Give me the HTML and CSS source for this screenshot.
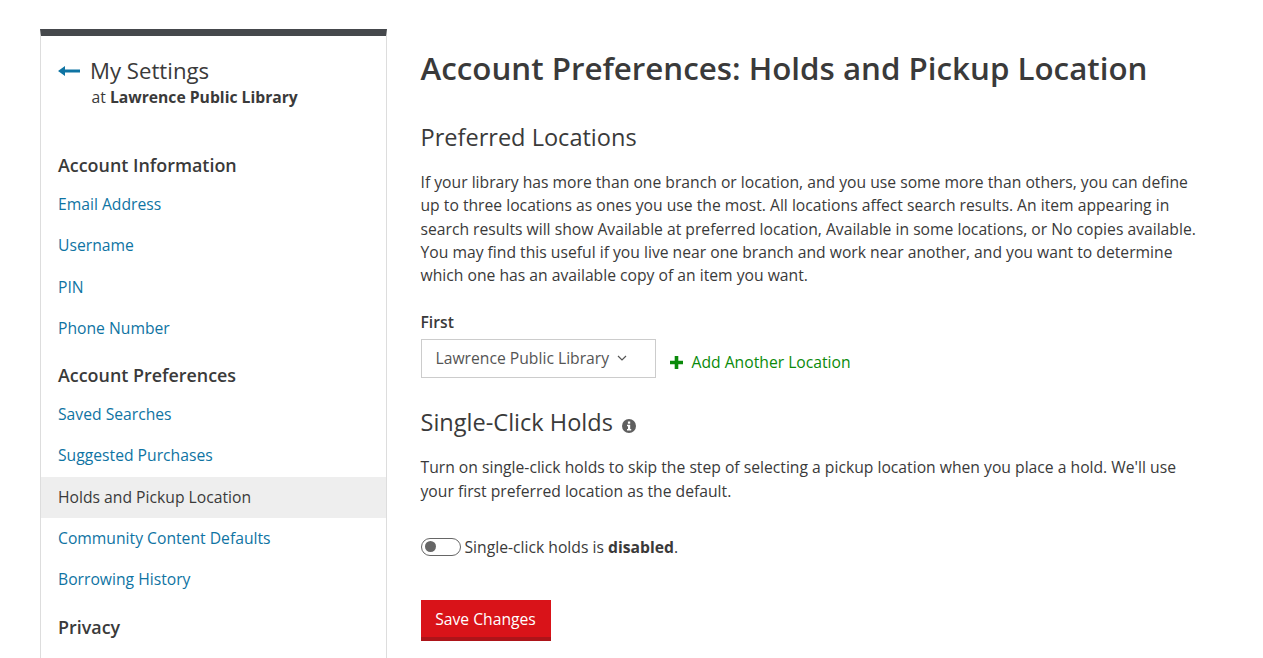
FILE: index.html
```html
<!DOCTYPE html>

<html>

<head>
	<title>Holds and Pickup Location</title>
	<link rel="stylesheet" href="styles.css">
</head>

<body>
	<div class='page'>
		<div class='sidebar'>
			<div class='side-title'>
				<svg class='back-arrow' width='22' height='10' viewBox='0 0 22 10'>
					<path d='M0 5 L7 0 V3.6 H22 V6.4 H7 V10 Z' fill='#0f74a3'></path>
				</svg>
				<span>My Settings</span>
			</div>
			<div class='side-sub'>at <b>Lawrence Public Library</b></div>

			<h3 class='side-head first'>Account Information</h3>
			<a class='side-link'>Email Address</a>
			<a class='side-link'>Username</a>
			<a class='side-link'>PIN</a>
			<a class='side-link'>Phone Number</a>

			<h3 class='side-head'>Account Preferences</h3>
			<a class='side-link'>Saved Searches</a>
			<a class='side-link'>Suggested Purchases</a>
			<a class='side-link active'>Holds and Pickup Location</a>
			<a class='side-link'>Community Content Defaults</a>
			<a class='side-link'>Borrowing History</a>

			<h3 class='side-head'>Privacy</h3>
		</div>

		<div class='main'>
			<h1>Account Preferences: Holds and Pickup Location</h1>

			<h2 class='locations'>Preferred Locations</h2>
			<p>If your library has more than one branch or location, and you use some more than others, you can define up to three locations as ones you use the most. All locations affect search results. An item appearing in search results will show Available at preferred location, Available in some locations, or No copies available. You may find this useful if you live near one branch and work near another, and you want to determine which one has an available copy of an item you want.</p>

			<div class='field-label'>First</div>
			<div class='field-row'>
				<div class='select'>
					<span>Lawrence Public Library</span>
					<svg width='10' height='6' viewBox='0 0 10 6'>
						<path d='M1 1 L5 5 L9 1' fill='none' stroke='#555' stroke-width='1.2'></path>
					</svg>
				</div>
				<a class='add-link'>
					<svg width='13' height='13' viewBox='0 0 13 13'>
						<path d='M4.7 0 H8.3 V4.7 H13 V8.3 H8.3 V13 H4.7 V8.3 H0 V4.7 H4.7 Z' fill='#0a8a0a'></path>
					</svg>
					Add Another Location
				</a>
			</div>

			<h2 class='holds'>Single-Click Holds
				<svg class='info' width='14' height='14' viewBox='0 0 14 14'>
					<circle cx='7' cy='7' r='7' fill='#5f5f5f'></circle>
					<rect x='5.9' y='2.5' width='2.3' height='2.2' fill='#fff'></rect>
					<path d='M5 5.8 H8.2 V10 H9.2 V11.4 H5 V10 H6 V7.2 H5 Z' fill='#fff'></path>
				</svg>
			</h2>
			<p>Turn on single-click holds to skip the step of selecting a pickup location when you place a hold. We'll use your first preferred location as the default.</p>

			<div class='toggle-row'>
				<span class='toggle'><span class='knob'></span></span>
				<span>Single-click holds is <b>disabled</b>.</span>
			</div>

			<button class='save'>Save Changes</button>
		</div>
	</div>
</body>

</html>
```

FILE: styles.css
```css
html,
body {
	height: 658px;
	overflow: hidden;
}

body {
	margin: 0;
	background-color: #fff;
	color: #3a3a3a;
	font-family: "Open Sans", sans-serif;
	font-size: 15.7px;
}

.page {
	display: flex;
	padding: 29px 0 0 40px;
}

.sidebar {
	width: 347px;
	height: 640px;
	box-sizing: border-box;
	flex-shrink: 0;
	border-top: 7px solid #45484c;
	border-left: 1px solid #ddd;
	border-right: 1px solid #ddd;
}

.side-title {
	display: flex;
	align-items: center;
	gap: 10px;
	padding: 20px 0 0 17px;
	font-size: 22.2px;
	line-height: 30px;
}

.side-sub {
	padding-left: 50.5px;
	line-height: 22px;
}

.side-head {
	margin: 12px 0 5px;
	padding-left: 17px;
	font-size: 17.9px;
	font-weight: 600;
	line-height: 28px;
}

.side-head.first {
	margin-top: 43px;
}

.side-link {
	display: block;
	padding-left: 17px;
	color: #0f74a3;
	line-height: 41.3px;
}

.side-link.active {
	background-color: #eee;
	color: #3a3a3a;
}

.main {
	width: 780px;
	margin-left: 33.5px;
}

h1 {
	margin: 14px 0 0;
	font-size: 31.3px;
	font-weight: 600;
	line-height: 50px;
}

h2 {
	margin: 0;
	font-size: 23.55px;
	font-weight: 400;
	line-height: 34px;
}

h2.locations {
	margin-top: 27px;
}

h2.holds {
	margin-top: 27px;
}

.info {
	margin-left: 3px;
	vertical-align: -2px;
}

p {
	margin: 17px 0 0;
	line-height: 23.25px;
}

.field-label {
	margin-top: 23px;
	font-weight: 600;
	line-height: 24px;
}

.field-row {
	display: flex;
	align-items: center;
	margin-top: 5px;
}

.select {
	display: flex;
	align-items: center;
	gap: 8px;
	width: 235px;
	height: 39px;
	box-sizing: border-box;
	padding: 0 0 2px 14px;
	border: 1px solid #ccc;
	color: #555;
}

.add-link {
	display: flex;
	align-items: center;
	gap: 9px;
	margin: 7px 0 0 14px;
	color: #0a8a0a;
}

.toggle-row {
	display: flex;
	align-items: center;
	gap: 4px;
	margin-top: 32px;
	line-height: 24px;
}

.toggle {
	display: flex;
	align-items: center;
	width: 40px;
	height: 18px;
	box-sizing: border-box;
	padding-left: 3px;
	border: 1px solid #666;
	border-radius: 9px;
}

.knob {
	width: 11px;
	height: 11px;
	border-radius: 50%;
	background-color: #666;
}

.save {
	display: block;
	width: 130px;
	height: 41px;
	margin-top: 41px;
	padding: 1px 0 0;
	border: 0;
	border-bottom: 4px solid #ad1419;
	background-color: #d91319;
	color: #fff;
	font-family: "Open Sans", sans-serif;
	font-size: 15.7px;
}
```
